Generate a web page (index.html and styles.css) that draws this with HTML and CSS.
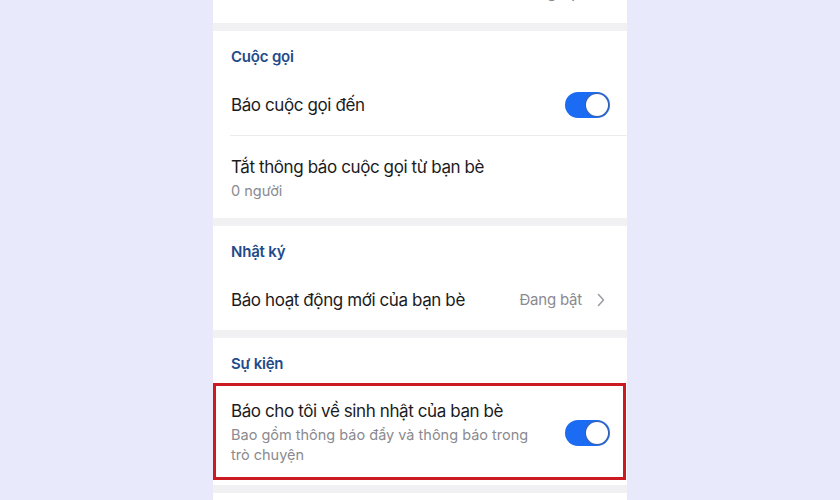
FILE: index.html
```html
<!DOCTYPE html>
<html lang="vi">
<head>
<meta charset="utf-8">
<link rel="stylesheet" href="styles.css">
</head>
<body>
<div class="screen">
  <section class="card card-top">
    <div class="row row-simple">
      <span class="title">Báo tin nhắn mới từ nhóm</span>
      <span class="value">Đang bật</span>
      <svg class="chev" viewBox="0 0 8 14" width="8" height="14"><path d="M1.5 1.5 L6.5 7 L1.5 12.5" fill="none" stroke="#9a9aa0" stroke-width="1.5" stroke-linecap="round" stroke-linejoin="round"/></svg>
    </div>
  </section>

  <section class="card">
    <div class="header">Cuộc gọi</div>
    <div class="row row-simple row-first sep">
      <span class="title">Báo cuộc gọi đến</span>
      <span class="toggle"><span class="knob"></span></span>
    </div>
    <div class="row row-two">
      <div class="texts">
        <div class="title">Tắt thông báo cuộc gọi từ bạn bè</div>
        <div class="sub">0 người</div>
      </div>
    </div>
  </section>

  <section class="card">
    <div class="header">Nhật ký</div>
    <div class="row row-simple">
      <span class="title">Báo hoạt động mới của bạn bè</span>
      <span class="value">Đang bật</span>
      <svg class="chev" viewBox="0 0 8 14" width="8" height="14"><path d="M1.5 1.5 L6.5 7 L1.5 12.5" fill="none" stroke="#9a9aa0" stroke-width="1.5" stroke-linecap="round" stroke-linejoin="round"/></svg>
    </div>
  </section>

  <section class="card">
    <div class="header">Sự kiện</div>
    <div class="row row-two highlighted">
      <div class="texts">
        <div class="title">Báo cho tôi về sinh nhật của bạn bè</div>
        <div class="sub">Bao gồm thông báo đẩy và thông báo trong trò chuyện</div>
      </div>
      <span class="toggle"><span class="knob"></span></span>
      <div class="mark"></div>
    </div>
  </section>

  <section class="card card-bottom"></section>
</div>
</body>
</html>
```

FILE: styles.css
```css
* { box-sizing: border-box; }
html, body { margin: 0; padding: 0; }
body {
  background: #e8eafc;
  font-family: "Inter", "Noto Sans", sans-serif;
  height: 500px;
  overflow: hidden;
}
.screen {
  width: 414px;
  margin: 0 auto;
  background: #f1f1f3;
  display: flex;
  flex-direction: column;
  gap: 8px;
  height: 500px;
  overflow: hidden;
}
.card {
  background: #fff;
  display: flex;
  flex-direction: column;
}
.card-top {
  margin-top: -39px;
}
.card-bottom { flex: 1; }
.header {
  padding: 15px 18px 5px 18px;
  line-height: 22px;
  font-size: 15px;
  font-weight: 600;
  letter-spacing: -0.2px;
  color: #234b8a;
}
.row {
  display: flex;
  align-items: center;
  padding: 1px 17px 0 18px;
  position: relative;
}
.row-simple { height: 62px; }
.row-first { height: 63px; }
.sep::after {
  content: "";
  position: absolute;
  left: 17px;
  right: 0;
  bottom: 0;
  height: 1px;
  background: #ececee;
}
.row-two {
  padding-top: 20px;
  padding-bottom: 17px;
}
.texts { flex: 1; padding-right: 20px; }
.title {
  font-size: 17px;
  line-height: 22px;
  letter-spacing: -0.4px;
  color: #1b1b1d;
  flex: 1;
}
.sub {
  margin-top: 3px;
  font-size: 14.5px;
  line-height: 20px;
  color: #8a8a8f;
}
.value {
  font-size: 15px;
  letter-spacing: -0.2px;
  color: #8a8a8f;
  margin-right: 15px;
}
.chev { margin-right: 5px; }
.toggle {
  width: 45px;
  height: 26px;
  border-radius: 13px;
  background: #1b6cf2;
  position: relative;
  flex: none;
}
.knob {
  position: absolute;
  right: 2px;
  top: 2px;
  width: 22px;
  height: 22px;
  border-radius: 50%;
  background: #fff;
  box-shadow: 0 0 0 1px #3a5fa8;
}
.highlighted { padding-bottom: 20px; }
.mark {
  position: absolute;
  left: 0;
  right: 1px;
  top: 3px;
  bottom: 5px;
  border: 3px solid #cc1a22;
}
```
